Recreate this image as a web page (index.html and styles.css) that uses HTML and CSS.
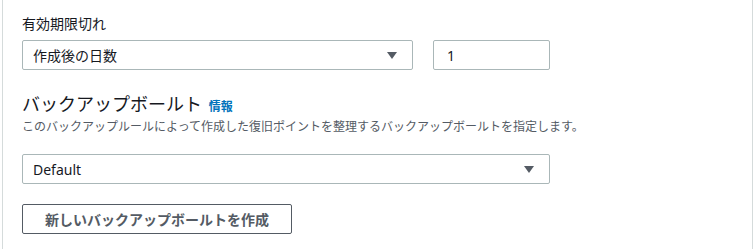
FILE: index.html
```html
<!DOCTYPE html>
<html lang="ja">
<head>
    <meta charset="UTF-8">
    <title>バックアップルール</title>
    <link rel="stylesheet" href="styles.css">
</head>
<body>
    <div class="panel">
        <div class="field">
            <label class="field-label">有効期限切れ</label>
            <div class="row">
                <div class="select select-expire">
                    <span>作成後の日数</span>
                    <span class="caret"></span>
                </div>
                <div class="input input-days">1</div>
            </div>
        </div>

        <div class="section">
            <h2>バックアップボールト <a class="info" href="#">情報</a></h2>
            <p class="desc">このバックアップルールによって作成した復旧ポイントを整理するバックアップボールトを指定します。</p>
            <div class="select select-vault">
                <span>Default</span>
                <span class="caret"></span>
            </div>
            <button class="btn" type="button">新しいバックアップボールトを作成</button>
        </div>
    </div>
</body>
</html>
```

FILE: styles.css
```css
* {
    margin: 0;
    padding: 0;
    box-sizing: border-box;
}

body {
    background: #fff;
    font-family: "Noto Sans", "Noto Sans CJK JP", sans-serif;
    color: #16191f;
    font-size: 14px;
}

.panel {
    margin-left: 2px;
    width: 751px;
    height: 249px;
    border-left: 1px solid #d5dbdb;
    border-right: 1px solid #d5dbdb;
    padding: 14px 0 0 19px;
}

.field-label {
    display: block;
    font-size: 14px;
    line-height: 20px;
    margin-bottom: 6px;
}

.row {
    display: flex;
    gap: 20px;
}

.select,
.input {
    height: 30px;
    border: 1px solid #aab7b8;
    border-radius: 2px;
    display: flex;
    align-items: center;
    padding: 0 10px;
    font-size: 14px;
}

.select {
    justify-content: space-between;
}

.select-expire {
    width: 391px;
}

.input-days {
    width: 117px;
    padding-left: 13px;
}

.caret {
    width: 0;
    height: 0;
    border-left: 5px solid transparent;
    border-right: 5px solid transparent;
    border-top: 7px solid #545b64;
    margin-right: 5px;
}

.section {
    margin-top: 22px;
}

h2 {
    font-size: 18px;
    font-weight: 400;
    line-height: 24px;
}

.info {
    color: #0073bb;
    font-size: 12px;
    font-weight: 700;
    text-decoration: none;
    margin-left: 2px;
}

.desc {
    font-size: 12px;
    line-height: 16px;
    color: #545b64;
    margin-bottom: 19px;
}

.select-vault {
    width: 528px;
}

.btn {
    display: block;
    margin-top: 20px;
    width: 270px;
    height: 30px;
    background: #fff;
    border: 1px solid #545b64;
    border-radius: 2px;
    font-family: inherit;
    font-size: 14px;
    font-weight: 700;
    color: #545b64;
}
```
